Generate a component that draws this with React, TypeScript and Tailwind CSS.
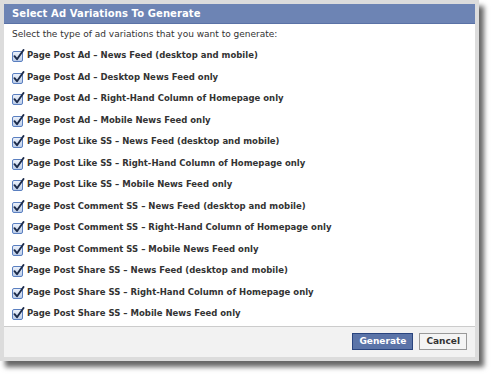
const options = [
  "Page Post Ad – News Feed (desktop and mobile)",
  "Page Post Ad – Desktop News Feed only",
  "Page Post Ad – Right-Hand Column of Homepage only",
  "Page Post Ad – Mobile News Feed only",
  "Page Post Like SS – News Feed (desktop and mobile)",
  "Page Post Like SS – Right-Hand Column of Homepage only",
  "Page Post Like SS – Mobile News Feed only",
  "Page Post Comment SS – News Feed (desktop and mobile)",
  "Page Post Comment SS – Right-Hand Column of Homepage only",
  "Page Post Comment SS – Mobile News Feed only",
  "Page Post Share SS – News Feed (desktop and mobile)",
  "Page Post Share SS – Right-Hand Column of Homepage only",
  "Page Post Share SS – Mobile News Feed only",
];

function CheckBox() {
  return (
    <svg width="13" height="13" viewBox="0 0 13 13" className="shrink-0">
      <defs>
        <linearGradient id="cb" x1="0" y1="0" x2="0" y2="1">
          <stop offset="0" stopColor="#eef3fb" />
          <stop offset="1" stopColor="#b9cbe8" />
        </linearGradient>
      </defs>
      <rect x="0.5" y="2.5" width="10" height="10" rx="1.5" fill="url(#cb)" stroke="#5a7fc0" />
      <path d="M2.5 7.2 L5 10.2 L11.5 1" fill="none" stroke="#1c2b4a" strokeWidth="1.9" strokeLinecap="round" strokeLinejoin="round" />
    </svg>
  );
}

export default function App() {
  return (
    <div className="w-[493px] h-[374px] bg-white font-['DejaVu_Sans',sans-serif]">
      <div className="w-[479px] border-4 border-[#dcdcdc] bg-white shadow-[5px_6px_5px_rgba(0,0,0,0.6)]">
        <div className="h-[20px] bg-[#6d84b4] border-b border-[#5a72a6] flex items-center px-[8px]">
          <span className="text-white font-bold text-[10px] tracking-[0.1px]">Select Ad Variations To Generate</span>
        </div>
        <div className="px-[8px] pb-[1px]">
          <div className="h-[21px] flex items-center text-[9px] text-[#333]">
            Select the type of ad variations that you want to generate:
          </div>
          {options.map((o) => (
            <div key={o} className="h-[21.5px] flex items-center gap-[2px]">
              <CheckBox />
              <span className="text-[8.5px] font-bold text-[#333]">{o}</span>
            </div>
          ))}
        </div>
        <div className="h-[31px] bg-[#f2f2f2] border-t border-[#cccccc] flex items-center justify-end gap-[6px] pr-[8px]">
          <button className="h-[17px] px-[6px] bg-[#5b74a8] border border-[#29447e] text-white font-bold text-[9px] leading-none">
            Generate
          </button>
          <button className="h-[17px] px-[6px] bg-[#f4f4f4] border border-[#999] text-[#333] font-bold text-[9px] leading-none">
            Cancel
          </button>
        </div>
      </div>
    </div>
  );
}
